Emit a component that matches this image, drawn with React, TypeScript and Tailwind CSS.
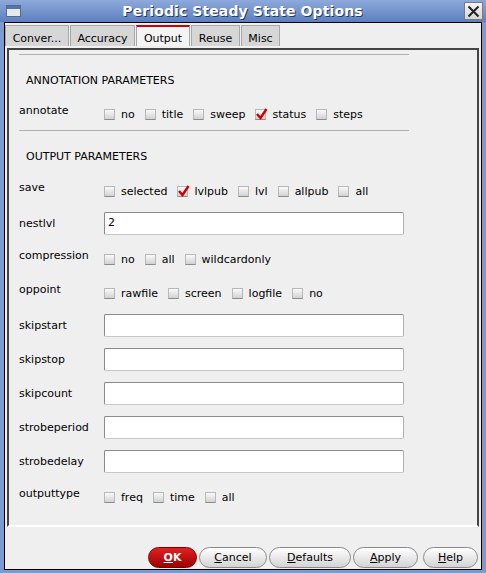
import React from "react"

const Check = ({ label, checked }: { label: string; checked?: boolean }) => (
  <div className="flex items-center">
    <div className="relative w-[11px] h-[11px] border border-[#b8b8b8] border-b-[#8c8c8c] bg-gradient-to-b from-[#fafafa] to-[#d2d2d2]">
      {checked && (
        <svg className="absolute -left-[1px] -top-[3px]" width="13" height="14" viewBox="0 0 13 14">
          <path d="M2 7 L5.5 11 L11.5 2" fill="none" stroke="#d00000" strokeWidth="2.4" />
        </svg>
      )}
    </div>
    <span className="ml-[6px] mt-[1px]">{label}</span>
  </div>
)

const CheckRow = ({ label, items }: { label: string; items: { l: string; c?: boolean }[] }) => (
  <div className="flex items-center h-[34px]">
    <div className="w-[85px] -mt-[2px]">{label}</div>
    <div className="flex items-center gap-[10px] mt-[4px]">
      {items.map((it) => (
        <Check key={it.l} label={it.l} checked={it.c} />
      ))}
    </div>
  </div>
)

const InputRow = ({ label, value }: { label: string; value?: string }) => (
  <div className="flex items-center h-[34px]">
    <div className="w-[85px] mt-[1px]">{label}</div>
    <div className="w-[300px] h-[23px] bg-white border border-[#8a8a8a] border-b-[#c8c8c8] border-r-[#b0b0b0] rounded-[2px] px-[3px] flex items-center">
      {value}
    </div>
  </div>
)

const Btn = ({ w, mn, rest, ok }: { w: string; mn: string; rest: string; ok?: boolean }) => (
  <div
    className={`${w} h-[21px] rounded-full flex items-center justify-center border ${
      ok
        ? "border-[#7a0000] bg-gradient-to-b from-[#e02020] to-[#a00000] text-white font-bold"
        : "border-[#8a8a8a] bg-gradient-to-b from-[#ffffff] to-[#d4d4d4] text-black"
    }`}
  >
    <span>
      <span className="underline">{mn}</span>
      {rest}
    </span>
  </div>
)

export default function App() {
  const tabs = [
    { t: "Conver...", w: "w-[64px]" },
    { t: "Accuracy", w: "w-[65px]" },
    { t: "Output", w: "w-[54px]", sel: true },
    { t: "Reuse", w: "w-[49px]" },
    { t: "Misc", w: "w-[39px]" },
  ]
  return (
    <div className="w-[486px] h-[573px] flex flex-col bg-[#7c9ad0] font-['DejaVu_Sans',sans-serif] text-[11px] leading-[14px] text-black">
      {/* title bar */}
      <div className="h-[22px] flex items-center bg-gradient-to-b from-[#8eaadb] to-[#5d7fc0] px-[6px]">
        <div className="w-[15px] h-[12px] border border-[#5a6a80] bg-[#e8e8e8] flex flex-col">
          <div className="h-[3px] bg-[#4f74b8]" />
        </div>
        <div className="flex-1 text-center text-white font-bold text-[14px] tracking-[0.1px] [text-shadow:1px_1px_0_#2a3a5a]">
          Periodic Steady State Options
        </div>
        <div className="w-[19px] h-[18px] border border-[#7a7a7a] bg-gradient-to-b from-[#f4f4f4] to-[#d6d6d6] flex items-center justify-center -mr-[3px]">
          <svg width="13" height="13" viewBox="0 0 13 13">
            <path d="M1.5 1.5 L11.5 11.5 M11.5 1.5 L1.5 11.5" stroke="#222" strokeWidth="2" />
          </svg>
        </div>
      </div>
      {/* client */}
      <div className="flex-1 mx-[4px] mb-[3px] border border-black bg-[#efefef] flex flex-col">
        <div className="flex mt-[2px] h-[21px]">
          {tabs.map((tb) => (
            <div
              key={tb.t}
              className={`${tb.w} flex items-end justify-center border-x border-t border-[#a8a8a8] ${
                tb.sel ? "bg-[#f4f4f4] border-t-2 border-t-[#d00000]" : "bg-[#d6d6d6]"
              } mr-[1px]`}
            >
              {tb.t}
            </div>
          ))}
        </div>
        {/* panel */}
        <div className="flex-1 mx-[2px] mt-[2px] border-t-2 border-x-2 border-t-[#444] border-x-[#444] border-b-2 border-b-white flex flex-col pl-[10px]">
          <div className="mt-[4px] w-[390px] h-px bg-[#b0b0b0]" />
          <div className="pl-[7px] pt-[19px] pb-[7px]">ANNOTATION PARAMETERS</div>
          <CheckRow
            label="annotate"
            items={[{ l: "no" }, { l: "title" }, { l: "sweep" }, { l: "status", c: true }, { l: "steps" }]}
          />
          <div className="mt-[1px] w-[390px] h-px bg-[#b0b0b0]" />
          <div className="pl-[7px] pt-[19px] pb-[8px]">OUTPUT PARAMETERS</div>
          <CheckRow
            label="save"
            items={[{ l: "selected" }, { l: "lvlpub", c: true }, { l: "lvl" }, { l: "allpub" }, { l: "all" }]}
          />
          <InputRow label="nestlvl" value="2" />
          <CheckRow label="compression" items={[{ l: "no" }, { l: "all" }, { l: "wildcardonly" }]} />
          <CheckRow label="oppoint" items={[{ l: "rawfile" }, { l: "screen" }, { l: "logfile" }, { l: "no" }]} />
          <InputRow label="skipstart" />
          <InputRow label="skipstop" />
          <InputRow label="skipcount" />
          <InputRow label="strobeperiod" />
          <InputRow label="strobedelay" />
          <CheckRow label="outputtype" items={[{ l: "freq" }, { l: "time" }, { l: "all" }]} />
        </div>
        {/* buttons */}
        <div className="h-[21px] mt-[20px] mb-[1px] flex justify-end gap-[2px] pr-[3px]">
          <Btn w="w-[49px]" mn="O" rest="K" ok />
          <Btn w="w-[68px]" mn="C" rest="ancel" />
          <Btn w="w-[82px]" mn="D" rest="efaults" />
          <Btn w="w-[65px]" mn="A" rest="pply" />
          <div className="w-px" />
          <Btn w="w-[55px]" mn="H" rest="elp" />
        </div>
      </div>
    </div>
  )
}
